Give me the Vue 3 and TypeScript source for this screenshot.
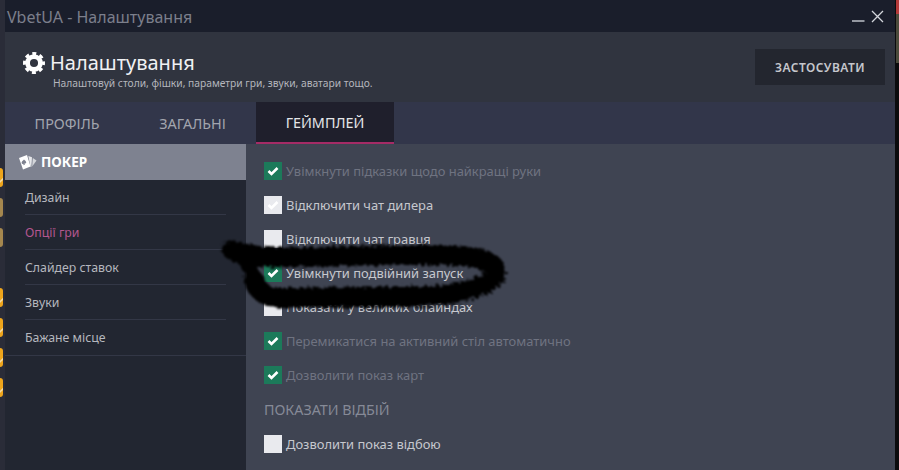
<script setup lang="ts">
interface Option {
  label: string
  checked: boolean
  dim: boolean
  faintTick?: boolean
}

const tabs = ['ПРОФІЛЬ', 'ЗАГАЛЬНІ', 'ГЕЙМПЛЕЙ']
const menu = ['Дизайн', 'Опції гри', 'Слайдер ставок', 'Звуки', 'Бажане місце']

const options: Option[] = [
  { label: 'Увімкнути підказки щодо найкращі руки', checked: true, dim: true },
  { label: 'Відключити чат дилера', checked: false, dim: false, faintTick: true },
  { label: 'Відключити чат гравця', checked: false, dim: false },
  { label: 'Увімкнути подвійний запуск', checked: true, dim: false },
  { label: 'Показати у великих блайндах', checked: false, dim: false },
  { label: 'Перемикатися на активний стіл автоматично', checked: true, dim: true },
  { label: 'Дозволити показ карт', checked: true, dim: true },
]

// icons of the desktop behind the window, peeking out on the left
const peeks = [
  { top: 168, tan: false },
  { top: 198, tan: true },
  { top: 228, tan: true },
  { top: 288, tan: false },
  { top: 318, tan: false },
  { top: 348, tan: false },
  { top: 378, tan: false },
]
</script>

<template>
  <div class="screen">
    <div class="desk-left">
      <span
        v-for="p in peeks"
        :key="p.top"
        class="chip"
        :class="{ tan: p.tan }"
        :style="{ top: p.top + 'px' }"
      ></span>
    </div>

    <div class="window">
      <div class="titlebar">
        <span class="title">VbetUA - Налаштування</span>
        <div class="win-buttons">
          <svg width="13" height="13" viewBox="0 0 13 13">
            <path d="M0 11H12.500" stroke="#c9ccd3" stroke-width="1.400" />
          </svg>
          <svg width="13" height="13" viewBox="0 0 13 13">
            <path d="M1 1L12 12M12 1L1 12" stroke="#d3d6dc" stroke-width="1.300" />
          </svg>
        </div>
      </div>

      <header class="header">
        <div class="heading">
          <div class="heading-top">
            <svg class="gear" width="22" height="22" viewBox="0 0 24 24" fill="none" stroke="#fff">
              <circle cx="12" cy="12" r="7" stroke-width="5.200" />
              <circle cx="12" cy="12" r="10" stroke-width="4" stroke-dasharray="4.200 3.654" stroke-dashoffset="2.100" />
            </svg>
            <h1>Налаштування</h1>
          </div>
          <p>Налаштовуй столи, фішки, параметри гри, звуки, аватари тощо.</p>
        </div>
        <button class="apply">ЗАСТОСУВАТИ</button>
      </header>

      <nav class="tabs">
        <div v-for="(tab, i) in tabs" :key="tab" class="tab" :class="{ active: i === 2 }">{{ tab }}</div>
      </nav>

      <div class="body">
        <aside class="sidebar">
          <div class="side-head">
            <svg width="18" height="15" viewBox="0 0 18 15">
              <path fill="#fff" d="M0 3L8 0l3.500 11.500L4 14.500z" />
              <path fill="#7e8290" d="M5 4.500c1 1 2 1.700 2.200 2.800.1 1-.9 1.500-1.700 1 .1.500.3.900.6 1.300l-1.800.6c.2-.500.2-1 .1-1.500-.6.700-1.700.3-1.800-.6-.2-1.200 1-2.400 2.400-3.600z" />
              <path fill="#e6e7ea" d="M9.300 1l3.700 1.300-.7 9.700-.8-.3z" />
              <path fill="#d4d6da" d="M13.800 3l3.700 2.500-4.300 6z" />
            </svg>
            <span>ПОКЕР</span>
          </div>
          <ul class="side-list">
            <li v-for="(item, i) in menu" :key="item" :class="{ current: i === 1 }">
              <span>{{ item }}</span>
            </li>
          </ul>
        </aside>

        <main class="content">
          <label v-for="opt in options" :key="opt.label" class="option" :class="{ dim: opt.dim }">
            <span class="box" :class="{ on: opt.checked }">
              <svg v-if="opt.checked || opt.faintTick" width="12" height="10" viewBox="0 0 12 10">
                <path d="M1.500 5L4.500 8L10.500 2" fill="none" stroke="currentColor" stroke-width="2.600" />
              </svg>
            </span>
            {{ opt.label }}
          </label>
          <h2>ПОКАЗАТИ ВІДБІЙ</h2>
          <label class="option last">
            <span class="box"></span>
            Дозволити показ відбою
          </label>
        </main>
      </div>
    </div>

    <div class="desk-right"></div>

    <!-- marker scribble drawn over the screenshot -->
    <svg class="scribble" width="899" height="470" viewBox="0 0 899 470">
      <filter id="rough" x="-5%" y="-30%" width="110%" height="160%">
        <feTurbulence type="fractalNoise" baseFrequency="0.28" numOctaves="3" seed="7" result="noise" />
        <feDisplacementMap in="SourceGraphic" in2="noise" scale="8" result="moved" />
        <feGaussianBlur in="moved" stdDeviation="0.8" />
      </filter>
      <g filter="url(#rough)" fill="none" stroke="#060606" stroke-linecap="round" stroke-linejoin="round">
        <path
          stroke-width="20"
          d="M232 250C245 255 262 258 300 257C345 256 400 255 440 255C475 255 496 261 496 272C496 283 472 290 445 295C400 299 340 296 290 298C266 299 258 292 254 280"
        />
        <path stroke-width="14" d="M238 252C248 264 252 270 254 278" />
      </g>
    </svg>
  </div>
</template>

<style>
html,
body {
  margin: 0;
  background: #15161c;
}
</style>

<style scoped>
.screen {
  position: relative;
  width: 899px;
  height: 470px;
  display: flex;
  overflow: hidden;
  font-family: "Noto Sans", "Open Sans", sans-serif;
}

.desk-left {
  position: relative;
  width: 5px;
  flex: none;
  background: #2a2c38;
}

.chip {
  position: absolute;
  left: 0;
  width: 3px;
  height: 19px;
  border-radius: 0 3px 3px 0;
  background: linear-gradient(135deg, #eea51c 55%, #f6e6c0 62%, #eea51c 72%);
}

.chip.tan {
  background: #a5874e;
}

.desk-right {
  width: 4px;
  flex: none;
  background: linear-gradient(#b53a3a 0 14px, #4b4b3c 14px 63px, #0b0b0d 63px);
  border-left: 1px solid #0b0b0d;
  box-sizing: border-box;
}

.window {
  flex: 1;
  display: flex;
  flex-direction: column;
  min-width: 0;
}

.titlebar {
  height: 32px;
  flex: none;
  background: #1a1e2b;
  display: flex;
  align-items: center;
  justify-content: space-between;
  padding: 0 11px 0 2px;
}

.title {
  padding-top: 1px;
  font-size: 16px;
  color: #7c7f8c;
}

.win-buttons {
  display: flex;
  gap: 6px;
}

.header {
  height: 70px;
  flex: none;
  box-sizing: border-box;
  background: #30343f;
  display: flex;
  justify-content: space-between;
  padding: 17px 10px 0 18px;
}

.heading-top {
  display: flex;
  align-items: center;
  gap: 5px;
}

.heading h1 {
  margin: 0;
  font-size: 20px;
  font-weight: 400;
  line-height: 27px;
  color: #f0f1f3;
}

.heading p {
  margin: 0 0 0 30px;
  font-size: 10.250px;
  line-height: 14px;
  color: #b4b6bd;
}

.apply {
  width: 130px;
  height: 36px;
  border: 0;
  background: #23262f;
  color: #c5c7cd;
  font-family: inherit;
  font-size: 12px;
  font-weight: 600;
  letter-spacing: 0.450px;
}

.tabs {
  height: 42px;
  flex: none;
  background: #32364a;
  display: flex;
  font-size: 14.400px;
  color: #a2a5ae;
}

.tab {
  display: flex;
  align-items: center;
  justify-content: center;
  box-sizing: border-box;
  width: 124px;
}

.tab:nth-child(2) {
  width: 127px;
}

.tab.active {
  width: 138px;
  background: #1f1f2c;
  border-bottom: 2px solid #a52b66;
  color: #e4e5e8;
}

.body {
  flex: 1;
  display: flex;
  min-height: 0;
}

.sidebar {
  width: 241px;
  flex: none;
  background: #222631;
}

.side-head {
  height: 36px;
  background: #7e8290;
  display: flex;
  align-items: center;
  gap: 4px;
  padding-left: 14px;
  color: #fff;
  font-size: 13.500px;
  font-weight: 700;
}

.side-list {
  list-style: none;
  margin: 0;
  padding: 0;
  border-bottom: 1px solid #333746;
}

.side-list li {
  height: 35px;
  margin: 0 20px;
  display: flex;
  align-items: center;
  border-bottom: 1px solid #333746;
  box-sizing: border-box;
  font-size: 12.300px;
  color: #b5b7be;
}

.side-list li:last-child {
  border-bottom: 0;
}

.side-list li.current {
  color: #b4568f;
}

.content {
  flex: 1;
  background: #3f4452;
  padding: 10px 0 0 18px;
}

.option {
  height: 34px;
  display: flex;
  align-items: center;
  gap: 4px;
  font-size: 12.950px;
  color: #c6c8ce;
}

.option.dim {
  color: #6f7381;
}

.option.last {
  margin-top: 1px;
}

.box {
  width: 18px;
  height: 18px;
  flex: none;
  background: #e9eaee;
  color: #fff;
  display: flex;
  align-items: center;
  justify-content: center;
}

.box.on {
  background: #1c7a5a;
}

.content h2 {
  margin: 0;
  height: 34px;
  display: flex;
  align-items: center;
  font-size: 14.300px;
  font-weight: 400;
  color: #868a97;
}

.scribble {
  position: absolute;
  inset: 0;
  pointer-events: none;
}
</style>
